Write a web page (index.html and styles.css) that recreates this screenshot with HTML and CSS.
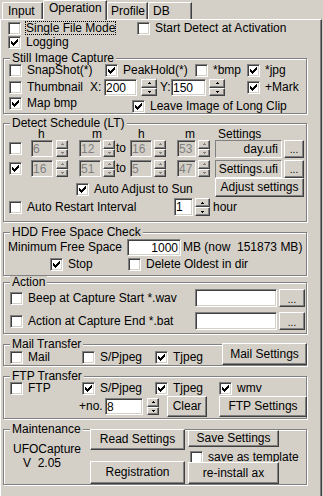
FILE: index.html
```html
<!DOCTYPE html>
<html lang="en">
<head>
    <meta charset="UTF-8">
    <meta name="viewport" content="width=device-width, initial-scale=1.0">
    <title>UFOCapture - Operation</title>
    <link rel="stylesheet" href="styles.css">
</head>
<body>
    <div class="tabs">
        <div class="tab tab-input">Input</div>
        <div class="tab tab-op active">Operation</div>
        <div class="tab tab-prof">Profile</div>
        <div class="tab tab-db">DB</div>
    </div>

    <div class="panel">
        <div class="row top1">
            <label class="chk w129"><span class="box"></span><span class="focus">Single File Mode</span></label>
            <label class="chk"><span class="box"></span>Start Detect at Activation</label>
        </div>
        <div class="row top2">
            <label class="chk"><span class="box on"></span>Logging</label>
        </div>

        <!-- Still Image Capture -->
        <div class="group still">
            <div class="group-title">Still Image Capture</div>
            <div class="row s1">
                <label class="chk w96"><span class="box"></span>SnapShot(*)</label>
                <label class="chk w90"><span class="box on"></span>PeakHold(*)</label>
                <label class="chk w52"><span class="box"></span>*bmp</label>
                <label class="chk"><span class="box on"></span>*jpg</label>
            </div>
            <div class="row s2">
                <label class="chk w81"><span class="box"></span>Thumbnail</label>
                <span class="w14">X:</span>
                <input class="field w33" value="200">
                <span class="spin wide ml4"><i></i><i></i></span>
                <span class="w11 ml3">Y:</span>
                <input class="field w35" value="150">
                <span class="spin wide ml3"><i></i><i></i></span>
                <label class="chk ml22"><span class="box on"></span>+Mark</label>
            </div>
            <div class="row s3">
                <label class="chk w123"><span class="box on"></span>Map bmp</label>
                <label class="chk leave"><span class="box on"></span>Leave Image of Long Clip</label>
            </div>
        </div>

        <!-- Detect Schedule -->
        <div class="group detect">
            <div class="group-title">Detect Schedule (LT)</div>
            <div class="row hdr">
                <span class="w54">h</span>
                <span class="w46">m</span>
                <span class="w47">h</span>
                <span class="w33">m</span>
                <span>Settings</span>
            </div>
            <div class="row sched">
                <span class="box"></span>
                <input class="field w22 ml9" value="6" disabled>
                <span class="spin off ml3"><i></i><i></i></span>
                <input class="field w22 ml11" value="12" disabled>
                <span class="spin off ml2"><i></i><i></i></span>
                <span class="to">to</span>
                <input class="field w22" value="16" disabled>
                <span class="spin off ml2"><i></i><i></i></span>
                <input class="field w19 ml11" value="53" disabled>
                <span class="spin off ml2"><i></i><i></i></span>
                <span class="file ml5">day.ufi</span>
                <button class="btn dots ml2">...</button>
            </div>
            <div class="row sched second">
                <span class="box on"></span>
                <input class="field w22 ml9" value="16" disabled>
                <span class="spin off ml3"><i></i><i></i></span>
                <input class="field w22 ml11" value="51" disabled>
                <span class="spin off ml2"><i></i><i></i></span>
                <span class="to">to</span>
                <input class="field w22" value="5" disabled>
                <span class="spin off ml2"><i></i><i></i></span>
                <input class="field w19 ml11" value="47" disabled>
                <span class="spin off ml2"><i></i><i></i></span>
                <span class="file ml5">Settings.ufi</span>
                <button class="btn dots ml2">...</button>
            </div>
            <div class="row adj">
                <label class="chk w139"><span class="box on"></span>Auto Adjust to Sun</label>
                <button class="btn adj-btn">Adjust settings</button>
            </div>
            <div class="row restart">
                <label class="chk w165"><span class="box"></span>Auto Restart Interval</label>
                <input class="field w19 h18" value="1">
                <span class="spin hour-spin ml2"><i></i><i></i></span>
                <span class="ml3">hour</span>
            </div>
        </div>

        <!-- HDD Free Space Check -->
        <div class="group hdd">
            <div class="group-title">HDD Free Space Check</div>
            <div class="row min">
                <span class="w119">Minimum Free Space</span>
                <input class="field w54 num" value="1000">
                <span class="w54 ml2">MB (now</span>
                <span>151873 MB)</span>
            </div>
            <div class="row stop">
                <label class="chk w78"><span class="box on"></span>Stop</label>
                <label class="chk"><span class="box"></span>Delete Oldest in dir</label>
            </div>
        </div>

        <!-- Action -->
        <div class="group action">
            <div class="group-title">Action</div>
            <div class="row act">
                <label class="chk w185"><span class="box"></span>Beep at Capture Start *.wav</label>
                <input class="field w82 h18" value="">
                <button class="btn dots act-dots ml2">...</button>
            </div>
            <div class="row act">
                <label class="chk w185"><span class="box"></span>Action at Capture End *.bat</label>
                <input class="field w82 h18" value="">
                <button class="btn dots act-dots ml2">...</button>
            </div>
        </div>

        <!-- Mail Transfer -->
        <div class="group mail">
            <div class="group-title">Mail Transfer</div>
            <div class="row mail-row">
                <label class="chk w72"><span class="box"></span>Mail</label>
                <label class="chk w73"><span class="box"></span>S/Pjpeg</label>
                <label class="chk w67"><span class="box on"></span>Tjpeg</label>
                <button class="btn wide-btn">Mail Settings</button>
            </div>
        </div>

        <!-- FTP Transfer -->
        <div class="group ftp">
            <div class="group-title">FTP Transfer</div>
            <div class="row f1">
                <label class="chk w72"><span class="box"></span>FTP</label>
                <label class="chk w73"><span class="box on"></span>S/Pjpeg</label>
                <label class="chk w64"><span class="box on"></span>Tjpeg</label>
                <label class="chk"><span class="box on"></span>wmv</label>
            </div>
            <div class="row f2">
                <span class="w26">+no.</span>
                <input class="field w38" value="8">
                <span class="spin ml4"><i></i><i></i></span>
                <button class="btn clear ml8">Clear</button>
                <button class="btn wide-btn ftp-btn ml12">FTP Settings</button>
            </div>
        </div>

        <!-- Maintenance -->
        <div class="group maint">
            <div class="group-title">Maintenance</div>
            <div class="maint-body">
                <div class="about">UFOCapture<span class="ver">V  2.05</span></div>
                <div class="mcol">
                    <button class="btn read">Read Settings</button>
                    <button class="btn reg">Registration</button>
                </div>
                <div class="mcol mcol2">
                    <button class="btn save">Save Settings</button>
                    <label class="chk tmpl"><span class="box"></span>save as template</label>
                    <button class="btn reinst">re-install ax</button>
                </div>
            </div>
        </div>
    </div>
</body>
</html>
```

FILE: styles.css
```css
* {
    box-sizing: border-box;
}
body {
    margin: 0;
    width: 323px;
    height: 496px;
    overflow: hidden;
    background-color: #d4d0c8;
    color: #000;
    font-family: "Liberation Sans", Arial, sans-serif;
    font-size: 12px;
    line-height: 13px;
}

/* tab strip */
.tabs {
    display: flex;
    align-items: flex-end;
    height: 19px;
    padding-left: 2px;
}
.tab {
    flex: none;
    height: 17px;
    padding: 2px 0 0 5px;
    border: 1px solid;
    border-bottom: 0;
    border-color: #fff #404040 #fff #fff;
    border-top-left-radius: 2px;
    box-shadow: inset -1px 0 #808080;
    white-space: nowrap;
}
.tab-input { width: 41px; }
.tab-op { width: 64px; }
.tab-prof { width: 41px; padding-left: 3px; }
.tab-db { width: 44px; padding-left: 4px; }
.tab.active {
    position: relative;
    z-index: 1;
    height: 20px;
    margin-bottom: -1px;
    padding-top: 1px;
    background-color: #d4d0c8;
}

.panel {
    width: 322px;
    height: 477px;
    padding-top: 2px;
    border-top: 1px solid #fff;
    border-left: 1px solid #fff;
    border-right: 1px solid #404040;
    box-shadow: inset -1px 0 #808080;
}

/* generic controls */
.row {
    display: flex;
    align-items: center;
}
.row > span {
    flex: none;
    white-space: nowrap;
}
.chk {
    display: flex;
    align-items: center;
    gap: 5px;
    flex: none;
    white-space: nowrap;
}
.box {
    width: 13px;
    height: 13px;
    flex: none;
    background-color: #fff;
    border: 1px solid;
    border-color: #808080 #fff #fff #808080;
    box-shadow: inset 1px 1px #404040, inset -1px -1px #d4d0c8;
}
.box.on::after {
    content: "";
    display: block;
    width: 1px;
    height: 3px;
    margin: 4px 0 0 2px;
    background-color: #000;
    box-shadow: 1px 1px #000, 2px 2px #000, 3px 1px #000, 4px 0 #000, 5px -1px #000, 6px -2px #000;
}
.focus {
    align-self: flex-start;
    margin: -1px 0 0 -1px;
    border: 1px dotted #000;
    line-height: 12px;
}
.field {
    flex: none;
    height: 17px;
    margin: 0;
    padding: 0 1px;
    font: inherit;
    color: #000;
    background-color: #fff;
    border: 1px solid;
    border-color: #808080 #fff #fff #808080;
    box-shadow: inset 1px 1px #404040, inset -1px -1px #d4d0c8;
    outline: none;
}
.field:disabled {
    color: #808080;
    background-color: #d4d0c8;
}
.field.num {
    text-align: right;
    padding-right: 2px;
}
.btn {
    flex: none;
    margin: 0;
    padding: 0;
    font: inherit;
    color: #000;
    background-color: #d4d0c8;
    border: 1px solid;
    border-color: #fff #404040 #404040 #fff;
    box-shadow: inset -1px -1px #808080;
}
.dots {
    width: 20px;
    height: 18px;
    padding-top: 3px;
    font-size: 10px;
    line-height: 10px;
}
.spin {
    display: flex;
    flex-direction: column;
    flex: none;
    width: 12px;
    height: 17px;
    --arrow: #000;
}
.spin.wide { width: 16px; }
.spin.hour-spin { width: 15px; height: 18px; }
.spin.off { --arrow: #808080; }
.spin i {
    display: flex;
    align-items: center;
    justify-content: center;
    flex: 1;
    border: 1px solid;
    border-color: #fff #404040 #404040 #fff;
    box-shadow: inset -1px -1px #808080;
}
.spin i::after {
    content: "";
    width: 1px;
    height: 1px;
    margin-top: -1px;
    background-color: var(--arrow);
    box-shadow: -1px 1px var(--arrow), 0 1px var(--arrow), 1px 1px var(--arrow);
}
.spin i + i::after {
    margin-top: 1px;
    box-shadow: -1px -1px var(--arrow), 0 -1px var(--arrow), 1px -1px var(--arrow);
}
.file {
    width: 67px;
    height: 18px;
    padding-right: 3px;
    line-height: 16px;
    text-align: right;
    border: 1px solid;
    border-color: #808080 #fff #fff #808080;
}

/* sizes */
.w11 { width: 11px; }
.w14 { width: 14px; }
.w19 { width: 19px; }
.w22 { width: 22px; }
.w26 { width: 26px; }
.w33 { width: 33px; }
.w35 { width: 35px; }
.w38 { width: 38px; }
.w46 { width: 46px; }
.w47 { width: 47px; }
.w52 { width: 52px; }
.w54 { width: 54px; }
.w64 { width: 64px; }
.w67 { width: 67px; }
.w72 { width: 72px; }
.w73 { width: 73px; }
.w78 { width: 78px; }
.w81 { width: 81px; }
.w82 { width: 82px; }
.w90 { width: 90px; }
.w96 { width: 96px; }
.w119 { width: 119px; }
.w123 { width: 123px; }
.w129 { width: 129px; }
.w139 { width: 139px; }
.w165 { width: 165px; }
.w185 { width: 185px; }
.h18 { height: 18px; }
.ml2 { margin-left: 2px; }
.ml3 { margin-left: 3px; }
.ml4 { margin-left: 4px; }
.ml5 { margin-left: 5px; }
.ml8 { margin-left: 8px; }
.ml9 { margin-left: 9px; }
.ml11 { margin-left: 11px; }
.ml12 { margin-left: 12px; }
.ml22 { margin-left: 22px; }

/* top checkboxes */
.top1 {
    height: 13px;
    padding-left: 7px;
}
.top2 {
    height: 13px;
    margin-top: 1px;
    padding-left: 7px;
}

/* group boxes */
.group {
    width: 304px;
    margin-left: 2px;
    border: 1px solid #808080;
    box-shadow: 1px 1px 0 #fff, inset 1px 1px 0 #fff;
}
.group-title {
    width: max-content;
    margin: -7px 0 0 6px;
    padding: 0 2px;
    line-height: 12px;
    background-color: #d4d0c8;
}

.still { margin-top: 9px; }
.s1 { height: 13px; padding-left: 5px; }
.s2 { height: 17px; margin-top: 2px; padding-left: 5px; }
.s3 {
    height: 16px;
    margin-top: 1px;
    padding-left: 5px;
    align-items: flex-start;
}
.leave { align-self: flex-end; }

.detect {
    margin-top: 9px;
    padding-bottom: 5px;
}
.hdr {
    height: 10px;
    padding-left: 34px;
    line-height: 10px;
}
.sched {
    height: 17px;
    margin-top: 1px;
    padding-left: 5px;
}
.sched.second { margin-top: 3px; }
.to {
    width: 15px;
    padding-left: 1px;
}
.adj {
    height: 19px;
    margin-top: 1px;
    padding-left: 72px;
}
.adj .chk {
    align-self: flex-start;
    margin-top: 5px;
}
.adj-btn {
    width: 89px;
    height: 19px;
}
.restart {
    height: 18px;
    margin-top: 1px;
    padding-left: 5px;
}

.hdd {
    margin-top: 10px;
    padding-bottom: 4px;
}
.min {
    height: 17px;
    margin-top: 1px;
    padding-left: 4px;
}
.stop {
    height: 13px;
    margin-top: 2px;
    padding-left: 46px;
}

.action {
    margin-top: 6px;
    padding-bottom: 3px;
}
.act {
    height: 18px;
    margin-top: 1px;
    padding-left: 6px;
}
.act + .act { margin-top: 5px; }
.act-dots { width: 26px; }

.mail { margin-top: 10px; }
.mail-row {
    height: 22px;
    margin-top: -7px;
    padding-left: 6px;
    align-items: flex-end;
}
.mail-row .chk { margin-bottom: 1px; }
.wide-btn {
    width: 85px;
    height: 22px;
}

.ftp {
    margin-top: 10px;
    padding-bottom: 1px;
}
.f1 {
    height: 13px;
    padding-left: 6px;
}
.f2 {
    height: 21px;
    margin-top: 1px;
    padding-left: 75px;
}
.clear {
    width: 40px;
    height: 21px;
}
.ftp-btn {
    width: 88px;
    height: 21px;
}

.maint { margin-top: 10px; }
.maint-body {
    display: flex;
    height: 55px;
    margin-top: -6px;
}
.about {
    width: 86px;
    padding: 13px 0 0 9px;
    line-height: 14px;
}
.ver {
    display: block;
    padding-left: 10px;
    white-space: pre;
}
.mcol {
    display: flex;
    flex-direction: column;
    width: 95px;
}
.read { height: 21px; }
.reg {
    height: 23px;
    margin-top: 11px;
}
.mcol2 {
    width: 91px;
    margin-left: 3px;
}
.save {
    height: 17px;
    margin-top: 1px;
}
.tmpl {
    height: 13px;
    margin-top: 4px;
    padding-left: 2px;
}
.reinst {
    height: 22px;
    margin-top: -2px;
}
```
